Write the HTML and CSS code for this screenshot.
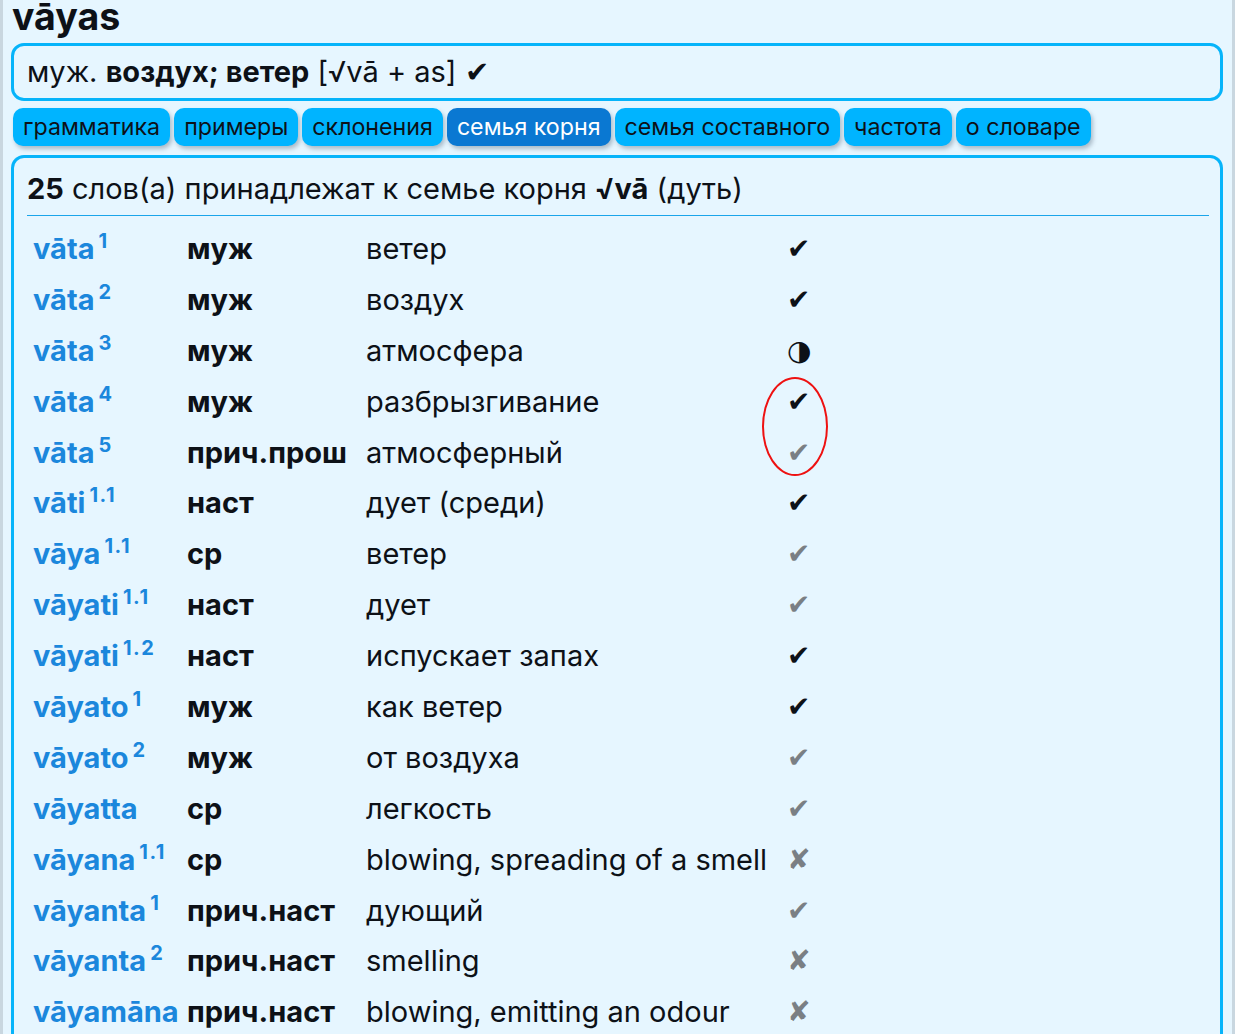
FILE: index.html
```html
<!DOCTYPE html>
<html lang="ru">
<head>
<meta charset="utf-8">
<title>vāyas</title>
<link rel="stylesheet" href="styles.css">
</head>
<body>
<div class="page">
  <h1 class="headword">vāyas</h1>
  <div class="summary">муж. <b>воздух; ветер</b> [√vā + as] ✔</div>
  <nav class="tabs">
    <span class="tab">грамматика</span>
    <span class="tab">примеры</span>
    <span class="tab">склонения</span>
    <span class="tab active">семья корня</span>
    <span class="tab">семья составного</span>
    <span class="tab">частота</span>
    <span class="tab">о словаре</span>
  </nav>
  <section class="family">
    <p class="family-head"><b>25</b> слов(а) принадлежат к семье корня <b>√vā</b> (дуть)</p>
    <div class="rows">
      <div class="row"><span class="lemma">vāta<sup>1</sup></span><span class="pos">муж</span><span class="mean">ветер</span><span class="mark">✔</span></div>
      <div class="row"><span class="lemma">vāta<sup>2</sup></span><span class="pos">муж</span><span class="mean">воздух</span><span class="mark">✔</span></div>
      <div class="row"><span class="lemma">vāta<sup>3</sup></span><span class="pos">муж</span><span class="mean">атмосфера</span><span class="mark half">◑</span></div>
      <div class="row"><span class="lemma">vāta<sup>4</sup></span><span class="pos">муж</span><span class="mean">разбрызгивание</span><span class="mark">✔</span></div>
      <div class="row"><span class="lemma">vāta<sup>5</sup></span><span class="pos">прич.прош</span><span class="mean">атмосферный</span><span class="mark grey">✔</span></div>
      <div class="row"><span class="lemma">vāti<sup>1.1</sup></span><span class="pos">наст</span><span class="mean">дует (среди)</span><span class="mark">✔</span></div>
      <div class="row"><span class="lemma">vāya<sup>1.1</sup></span><span class="pos">ср</span><span class="mean">ветер</span><span class="mark grey">✔</span></div>
      <div class="row"><span class="lemma">vāyati<sup>1.1</sup></span><span class="pos">наст</span><span class="mean">дует</span><span class="mark grey">✔</span></div>
      <div class="row"><span class="lemma">vāyati<sup>1.2</sup></span><span class="pos">наст</span><span class="mean">испускает запах</span><span class="mark">✔</span></div>
      <div class="row"><span class="lemma">vāyato<sup>1</sup></span><span class="pos">муж</span><span class="mean">как ветер</span><span class="mark">✔</span></div>
      <div class="row"><span class="lemma">vāyato<sup>2</sup></span><span class="pos">муж</span><span class="mean">от воздуха</span><span class="mark grey">✔</span></div>
      <div class="row"><span class="lemma">vāyatta</span><span class="pos">ср</span><span class="mean">легкость</span><span class="mark grey">✔</span></div>
      <div class="row"><span class="lemma">vāyana<sup>1.1</sup></span><span class="pos">ср</span><span class="mean">blowing, spreading of a smell</span><span class="mark grey">✘</span></div>
      <div class="row"><span class="lemma">vāyanta<sup>1</sup></span><span class="pos">прич.наст</span><span class="mean">дующий</span><span class="mark grey">✔</span></div>
      <div class="row"><span class="lemma">vāyanta<sup>2</sup></span><span class="pos">прич.наст</span><span class="mean">smelling</span><span class="mark grey">✘</span></div>
      <div class="row"><span class="lemma">vāyamāna</span><span class="pos">прич.наст</span><span class="mean">blowing, emitting an odour</span><span class="mark grey">✘</span></div>
    </div>
    <div class="annotation"></div>
  </section>
</div>
</body>
</html>
```

FILE: styles.css
```css
html {
  background: #c9d7e0;
  height: 100%;
}
body {
  margin: 0 3px 0 3px;
  background: #e6f6ff;
  min-height: 100%;
  font-family: Inter, "Noto Sans", sans-serif;
  color: #0d1117;
  overflow: hidden;
}
.page {
  padding: 0 9px 0 8px;
}
.headword {
  margin: 0;
  padding-left: 1px;
  font-size: 37.5px;
  font-weight: 700;
  line-height: 33px;
  height: 43px;
}
.summary {
  border: 3px solid #06b4fa;
  border-radius: 13px;
  height: 52px;
  padding: 0 13px;
  font-size: 29px;
  line-height: 52px;
  white-space: nowrap;
}
.summary b { font-weight: 700; }
.tabs {
  display: flex;
  gap: 4px;
  margin-top: 7px;
  padding-left: 2px;
}
.tab {
  background: #00b4ff;
  border-radius: 10px;
  height: 38px;
  line-height: 38px;
  padding: 0 10px;
  font-size: 23.2px;
  color: #0d1117;
  white-space: nowrap;
  box-shadow: 2px 3px 4px rgba(60, 80, 100, 0.35);
}
.tab.active {
  background: #0a78d2;
  color: #ffffff;
}
.family {
  position: relative;
  margin-top: 9px;
  border: 3px solid #06b4fa;
  border-bottom: none;
  border-radius: 13px 13px 0 0;
  padding: 0 11px 0 13px;
}
.family-head {
  margin: 0;
  font-size: 29px;
  line-height: 34px;
  padding: 14px 0 9px 0;
  border-bottom: 1px solid #1aa5ea;
  white-space: nowrap;
}
.rows {
  padding: 7px 0 0 6px;
}
.row {
  display: grid;
  grid-template-columns: 154px 179px 421px 40px;
  height: 50.9px;
  align-items: center;
  font-size: 29px;
}
.lemma {
  color: #1b87dc;
  font-weight: 700;
  white-space: nowrap;
}
.lemma sup {
  font-size: 20px;
  font-weight: 700;
  vertical-align: 0;
  position: relative;
  top: -11px;
  margin-left: 4px;
  letter-spacing: 1.5px;
}
.pos {
  font-weight: 700;
  white-space: nowrap;
}
.mean {
  white-space: nowrap;
}
.mark {
  font-family: "DejaVu Sans", sans-serif;
  font-size: 28px;
  text-align: center;
  width: 22px;
  color: #0d1117;
}
.mark.grey { color: #7a7f84; }
.mark.half { font-size: 28px; }
.annotation {
  position: absolute;
  left: 748px;
  top: 219px;
  width: 62px;
  height: 95px;
  border: 2px solid #ee1111;
  border-radius: 50%;
}
```
